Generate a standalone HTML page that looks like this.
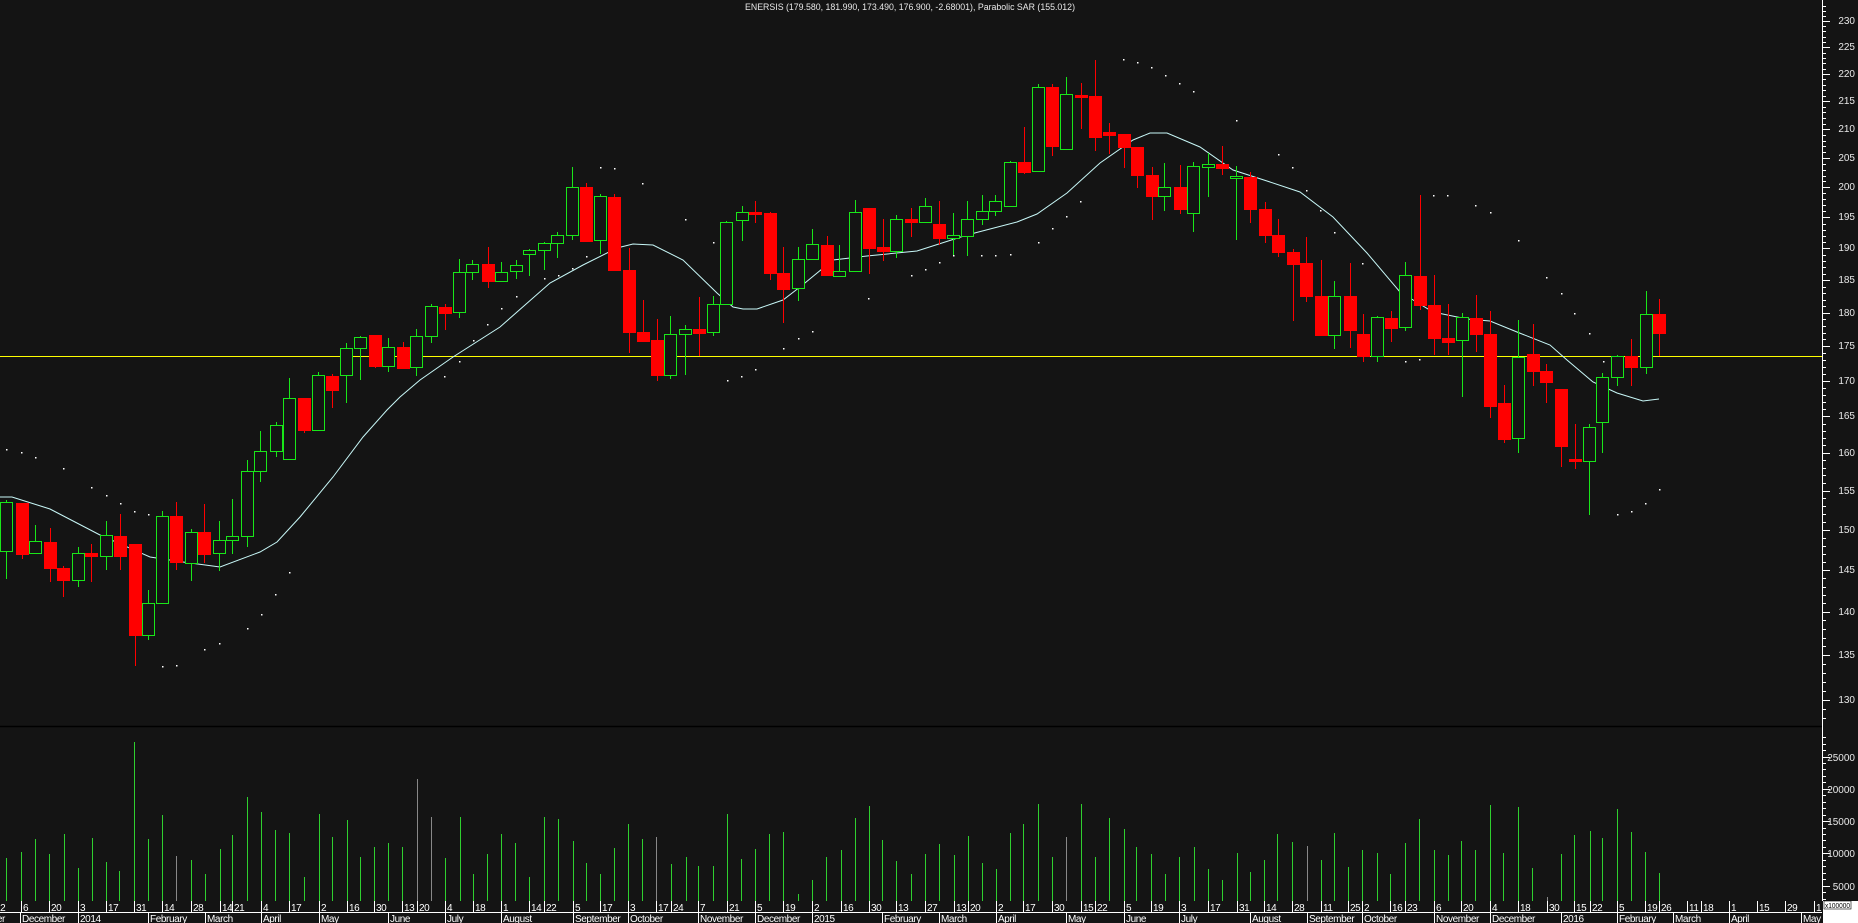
<!DOCTYPE html>
<html><head><meta charset="utf-8">
<style>
html,body{margin:0;padding:0;background:#141414;overflow:hidden;}
svg{display:block;}
text{font-family:"Liberation Sans",sans-serif;}
.pl{font-size:10px;fill:#e8e8e8;text-anchor:end;}
.dl{font-size:10px;fill:#ffffff;letter-spacing:-0.4px;}
</style></head>
<body>
<svg id="s" width="1858" height="923" xmlns="http://www.w3.org/2000/svg">
<rect width="1858" height="923" fill="#141414"/>
<text x="910" y="10" font-size="9" fill="#e8e8e8" text-anchor="middle" textLength="330" lengthAdjust="spacingAndGlyphs">ENERSIS (179.580, 181.990, 173.490, 176.900, -2.68001), Parabolic SAR (155.012)</text>
<line x1="0" y1="726.5" x2="1822" y2="726.5" stroke="#000" stroke-width="1.5"/>
<line x1="0" y1="356.5" x2="1822" y2="356.5" stroke="#ffff00" stroke-width="1"/>
<g id="vol"></g>
<g id="sar" fill="#fff"></g>
<polyline fill="none" stroke="#c8f8f8" stroke-width="1" points="0,497 12,497 50,509 100,535 150,557 183,562 220,567 260,552 277,542 300,517 333,477 363,437 387,410 400,397 420,380 453,357 500,327 550,283 583,265 617,248 633,244 653,245 683,260 717,293 733,307 743,309 757,309 783,300 800,287 833,260 867,256 917,251 967,235 1017,222 1037,214 1067,193 1100,163 1133,140 1150,133 1167,133 1200,147 1233,170 1267,181 1300,192 1333,217 1367,253 1400,292 1433,312 1467,319 1490,321 1517,332 1550,345 1567,360 1593,382 1617,393 1643,401 1659,399"/>
<g id="cdl"></g>
<!-- right axis -->
<line x1="1822.5" y1="0" x2="1822.5" y2="901" stroke="#fff" stroke-width="1"/>
<g id="ticks" stroke="#fff" stroke-width="1"></g>
<g class="pl">
<text x="1855" y="24">230</text><text x="1855" y="50">225</text><text x="1855" y="77">220</text><text x="1855" y="104">215</text><text x="1855" y="132">210</text><text x="1855" y="161">205</text><text x="1855" y="190">200</text><text x="1855" y="220">195</text><text x="1855" y="251">190</text><text x="1855" y="283">185</text><text x="1855" y="316">180</text><text x="1855" y="349">175</text><text x="1855" y="384">170</text><text x="1855" y="419">165</text><text x="1855" y="456">160</text><text x="1855" y="494">155</text><text x="1855" y="533">150</text><text x="1855" y="573">145</text><text x="1855" y="615">140</text><text x="1855" y="658">135</text><text x="1855" y="703">130</text>
<text x="1855" y="761">25000</text><text x="1855" y="793">20000</text><text x="1855" y="825">15000</text><text x="1855" y="857">10000</text><text x="1855" y="890">5000</text>
</g>
<rect x="1823" y="901" width="35" height="22" fill="#fff"/>
<rect x="1824" y="901" width="27" height="8" fill="#fff" stroke="#000" stroke-width="0.6"/>
<text x="1825" y="908" font-size="7" fill="#000" textLength="25" lengthAdjust="spacingAndGlyphs">x100000</text>
<!-- date axis -->
<line x1="0" y1="912.5" x2="1822" y2="912.5" stroke="#fff"/>
<g id="dt" stroke="#fff"></g>
<g class="dl">
<text x="-5" y="911">22</text><text x="23" y="911">6</text><text x="51" y="911">20</text><text x="80" y="911">3</text><text x="108" y="911">17</text><text x="136" y="911">31</text><text x="164" y="911">14</text><text x="193" y="911">28</text><text x="222" y="911">14</text><text x="234" y="911">21</text><text x="263" y="911">4</text><text x="291" y="911">17</text><text x="321" y="911">2</text><text x="349" y="911">16</text><text x="376" y="911">30</text><text x="404" y="911">13</text><text x="419" y="911">20</text><text x="447" y="911">4</text><text x="475" y="911">18</text><text x="503" y="911">1</text><text x="531" y="911">14</text><text x="546" y="911">22</text><text x="575" y="911">5</text><text x="602" y="911">17</text><text x="630" y="911">3</text><text x="658" y="911">17</text><text x="673" y="911">24</text><text x="700" y="911">7</text><text x="729" y="911">21</text><text x="757" y="911">5</text><text x="785" y="911">19</text><text x="814" y="911">2</text><text x="843" y="911">16</text><text x="871" y="911">30</text><text x="898" y="911">13</text><text x="927" y="911">27</text><text x="956" y="911">13</text><text x="970" y="911">20</text><text x="998" y="911">2</text><text x="1025" y="911">17</text><text x="1054" y="911">30</text><text x="1083" y="911">15</text><text x="1097" y="911">22</text><text x="1126" y="911">5</text><text x="1153" y="911">19</text><text x="1181" y="911">3</text><text x="1210" y="911">17</text><text x="1239" y="911">31</text><text x="1266" y="911">14</text><text x="1294" y="911">28</text><text x="1323" y="911">11</text><text x="1350" y="911">25</text><text x="1364" y="911">2</text><text x="1392" y="911">16</text><text x="1407" y="911">23</text><text x="1436" y="911">6</text><text x="1463" y="911">20</text><text x="1492" y="911">4</text><text x="1520" y="911">18</text><text x="1549" y="911">30</text><text x="1576" y="911">15</text><text x="1592" y="911">22</text><text x="1619" y="911">5</text><text x="1647" y="911">19</text><text x="1661" y="911">26</text><text x="1689" y="911">11</text><text x="1703" y="911">18</text><text x="1731" y="911">1</text><text x="1759" y="911">15</text><text x="1787" y="911">29</text><text x="1816" y="911">1</text>
<text x="-38" y="922">November</text><text x="22" y="922">December</text><text x="80" y="922">2014</text><text x="150" y="922">February</text><text x="207" y="922">March</text><text x="263" y="922">April</text><text x="321" y="922">May</text><text x="390" y="922">June</text><text x="447" y="922">July</text><text x="503" y="922">August</text><text x="575" y="922">September</text><text x="630" y="922">October</text><text x="700" y="922">November</text><text x="757" y="922">December</text><text x="814" y="922">2015</text><text x="884" y="922">February</text><text x="941" y="922">March</text><text x="998" y="922">April</text><text x="1068" y="922">May</text><text x="1126" y="922">June</text><text x="1181" y="922">July</text><text x="1252" y="922">August</text><text x="1309" y="922">September</text><text x="1364" y="922">October</text><text x="1436" y="922">November</text><text x="1492" y="922">December</text><text x="1563" y="922">2016</text><text x="1619" y="922">February</text><text x="1675" y="922">March</text><text x="1731" y="922">April</text><text x="1803" y="922">May</text>
</g>
</svg>
<script>
var NS="http://www.w3.org/2000/svg";
function el(p,n,a){var e=document.createElementNS(NS,n);for(var k in a)e.setAttribute(k,a[k]);p.appendChild(e);return e;}
var C=[[6,500,502,551,578,1],[22,503,503,554,558,0],[35,525,541,553,553,1],[50,528,542,568,581,0],[63,566,568,580,596,0],[78,547,553,580,586,1],[91,544,553,556,581,0],[106,521,535,556,569,1],[120,514,536,556,569,0],[135,544,544,635,665,0],[148,590,603,635,639,1],[162,511,516,603,603,1],[176,502,516,562,569,0],[191,529,532,563,580,1],[204,504,532,554,562,0],[219,521,540,553,570,1],[232,499,536,540,553,1],[247,460,471,536,546,1],[260,431,451,471,481,1],[276,422,425,451,456,1],[289,378,398,459,459,1],[304,398,398,430,432,0],[318,372,375,430,430,1],[332,374,376,390,407,0],[346,343,348,375,402,1],[360,336,337,348,379,1],[375,335,335,366,367,0],[388,338,347,366,371,1],[403,342,347,368,368,0],[416,329,336,367,375,1],[431,304,306,336,342,1],[445,304,307,313,329,0],[459,259,272,312,317,1],[472,260,264,272,279,1],[488,247,264,281,287,0],[501,262,272,281,281,1],[516,260,265,271,278,1],[529,249,250,254,275,1],[544,242,243,250,269,1],[557,232,235,243,257,1],[572,167,187,235,239,1],[586,183,187,241,241,0],[600,194,196,240,253,1],[614,194,197,270,270,0],[629,248,270,332,352,0],[643,300,332,341,341,0],[657,319,340,375,380,0],[670,316,334,375,378,1],[685,325,329,334,374,1],[699,297,329,333,355,0],[713,296,304,332,335,1],[726,221,222,304,304,1],[742,206,212,220,240,1],[755,201,212,214,222,0],[770,212,213,273,279,0],[783,247,273,289,322,0],[798,247,259,288,300,1],[812,229,244,259,259,1],[827,236,245,275,275,0],[839,245,271,276,276,1],[855,200,212,271,271,1],[869,208,208,248,273,0],[883,219,247,251,260,0],[896,215,219,251,257,1],[911,208,219,222,236,0],[925,198,206,222,222,1],[939,201,224,238,244,0],[953,213,235,238,254,1],[967,201,219,236,255,1],[982,195,211,219,224,1],[995,195,201,211,215,1],[1010,161,162,206,206,1],[1024,127,162,172,173,0],[1038,84,87,171,171,1],[1052,84,87,146,155,0],[1066,77,94,149,149,1],[1081,83,95,96,128,0],[1095,60,96,137,150,0],[1109,123,132,135,153,0],[1124,134,134,147,167,0],[1137,147,147,175,187,0],[1152,167,175,196,219,0],[1164,163,187,196,210,1],[1180,165,187,209,213,0],[1193,162,166,213,231,1],[1208,153,164,167,196,1],[1222,146,164,168,174,0],[1236,166,176,178,239,1],[1250,172,177,209,222,0],[1265,202,209,235,242,0],[1278,219,235,252,256,0],[1293,249,252,264,320,0],[1306,237,263,296,301,0],[1321,260,296,335,335,0],[1334,281,296,335,348,1],[1350,263,296,330,347,0],[1363,314,334,356,361,0],[1377,316,317,356,361,1],[1391,311,318,328,341,0],[1405,262,275,327,330,1],[1420,195,276,305,309,0],[1434,275,305,338,354,0],[1448,304,338,342,354,0],[1462,313,317,340,396,1],[1476,295,318,334,351,0],[1490,311,334,406,417,0],[1504,385,403,439,442,0],[1518,320,357,438,452,1],[1533,324,354,371,385,0],[1546,364,371,382,402,0],[1561,389,389,446,466,0],[1575,424,459,461,468,0],[1589,424,427,461,514,1],[1602,373,377,422,452,1],[1617,355,356,377,385,1],[1631,339,356,367,385,0],[1646,291,314,367,373,1],[1659,299,314,333,355,0]];
var g=document.getElementById("cdl");
C.forEach(function(c){var x=c[0],col=c[5]?"#19e619":"#ff0000";
 el(g,"line",{x1:x+.5,y1:c[1],x2:x+.5,y2:c[4]+1,stroke:col,"stroke-width":1});
 var h=Math.max(c[3]-c[2],2);
 if(c[5]) el(g,"rect",{x:x-5.5,y:c[2]+.5,width:12,height:h,fill:"#141414",stroke:col,"stroke-width":1});
 else el(g,"rect",{x:x-6,y:c[2],width:13,height:h+1,fill:col});
});
var V=[[6,858],[21,852],[35,839],[49,854],[64,834],[78,868],[92,838],[106,862],[119,871],[134,742],[148,839],[162,815],[176,856,1],[191,860],[205,874],[220,849],[232,835],[247,797],[261,812],[275,830],[289,833],[304,877],[319,814],[332,837],[347,820],[360,857],[374,847],[388,843],[402,847],[417,779,1],[431,817,1],[445,858],[460,817],[473,874],[487,854],[501,834],[515,843],[529,877],[544,817],[558,819],[573,841],[586,863],[600,874],[614,848],[628,824],[642,839],[656,837,1],[671,864],[686,857],[698,866],[713,866],[727,814],[741,859],[755,849],[769,834],[783,832],[798,894],[812,880],[826,857],[841,850],[855,818],[869,806],[882,840],[896,861],[911,874],[925,854],[939,844],[954,855],[968,836],[982,863],[996,869],[1010,833],[1023,824],[1038,804],[1052,857],[1066,837,1],[1081,804],[1095,857],[1109,818],[1124,829],[1136,847],[1151,854],[1165,874],[1179,857],[1194,847],[1208,869],[1222,880],[1237,853],[1250,872],[1264,860],[1277,834],[1292,842],[1307,846,1],[1321,860],[1334,833],[1348,867],[1362,850],[1377,853],[1390,874],[1405,843],[1419,819],[1434,850],[1448,855],[1461,841],[1475,850],[1490,805],[1503,853],[1518,807],[1532,868],[1547,897,1],[1561,854],[1574,835],[1590,831],[1602,838],[1617,809],[1631,832],[1645,852],[1659,873]];
var vg=document.getElementById("vol");
V.forEach(function(v){el(vg,"line",{x1:v[0]+.5,y1:v[1],x2:v[0]+.5,y2:901,stroke:v[2]?"#888":"#2fcf2f","stroke-width":1});});
var S=[[6,449],[21,452],[35,457],[63,468],[91,487],[106,495],[120,503],[134,511],[148,514],[162,666],[176,665],[204,649],[219,643],[247,628],[261,614],[275,594],[289,572],[444,376],[459,361],[473,340],[487,324],[501,308],[516,296],[544,278],[558,275],[572,268],[586,256],[600,167],[614,168],[642,183],[685,219],[713,242],[727,380],[741,376],[755,369],[783,348],[798,338],[812,331],[868,298],[911,275],[925,269],[939,262],[953,255],[981,255],[995,255],[1010,254],[1038,242],[1052,228],[1066,216],[1080,201],[1123,59],[1137,62],[1151,67],[1165,75],[1179,83],[1193,91],[1236,120],[1278,154],[1292,167],[1306,190],[1320,210],[1334,232],[1362,263],[1405,361],[1419,359],[1433,195],[1447,195],[1475,205],[1490,212],[1518,240],[1546,277],[1561,293],[1574,313],[1589,333],[1603,361],[1617,514],[1631,511],[1645,503],[1659,489]];
var sg=document.getElementById("sar");
S.forEach(function(s){el(sg,"rect",{x:s[0],y:s[1],width:1.5,height:1.5});});
var tg=document.getElementById("ticks");
for(var p=127;p<=233;p++){var y=700-1190*Math.log(p/130);if(y<0||y>724)continue;var L=(p%5==0)?7:3;el(tg,"line",{x1:1823,y1:Math.round(y)+.5,x2:1823+L,y2:Math.round(y)+.5});}
for(var v=1000;v<=28000;v+=1000){var y=918-v*32.3/5000;var L=(v%5000==0)?7:3;el(tg,"line",{x1:1823,y1:Math.round(y)+.5,x2:1823+L,y2:Math.round(y)+.5});}
var dg=document.getElementById("dt");
[-8,21,49,78,106,134,162,191,220,232,261,289,319,347,374,402,417,445,473,501,529,544,573,600,628,656,671,698,727,755,783,812,841,869,896,925,954,968,996,1023,1052,1081,1095,1124,1151,1179,1208,1237,1264,1292,1321,1348,1362,1390,1405,1434,1461,1490,1518,1547,1574,1590,1617,1645,1659,1687,1701,1729,1757,1785,1814].forEach(function(x){el(dg,"line",{x1:x+.5,y1:901,x2:x+.5,y2:912});});
[20,78,148,205,261,319,388,445,501,573,628,698,755,812,882,939,996,1066,1124,1179,1250,1307,1362,1434,1490,1561,1617,1673,1729,1801].forEach(function(x){el(dg,"line",{x1:x+.5,y1:912,x2:x+.5,y2:923});});
</script>
</body></html>
